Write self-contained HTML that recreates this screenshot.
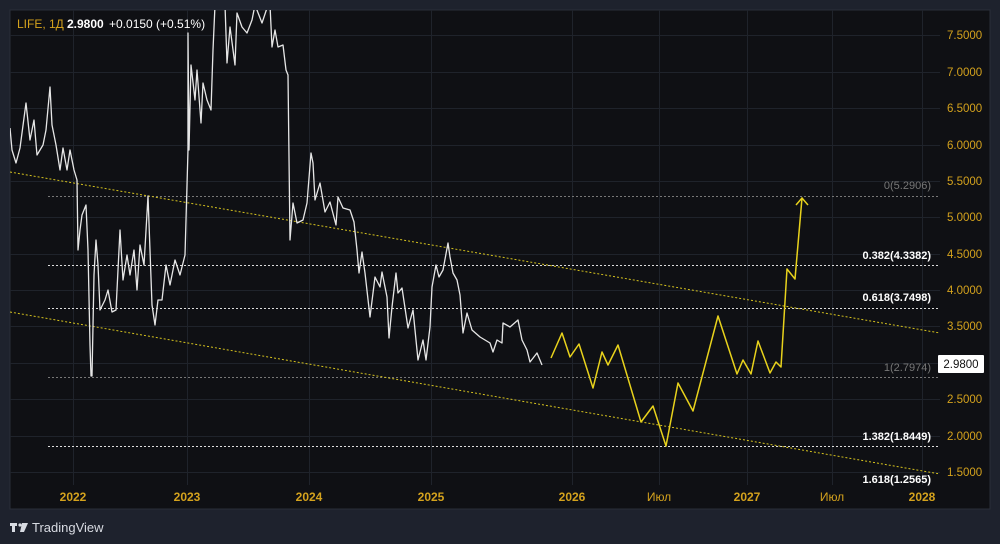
<!DOCTYPE html>
<html><head><meta charset="utf-8">
<style>
html,body{margin:0;padding:0;background:#1e222d;width:1000px;height:544px;overflow:hidden;font-family:"Liberation Sans",sans-serif;}
</style></head><body>
<svg width="1000" height="544" viewBox="0 0 1000 544" xmlns="http://www.w3.org/2000/svg" font-family="Liberation Sans, sans-serif">
<rect width="1000" height="544" fill="#1e222d"/>
<rect x="10" y="10" width="980" height="499" fill="#0f1014" stroke="#2a2e39" stroke-width="1"/>
<defs><clipPath id="c"><rect x="10" y="10" width="930" height="475"/></clipPath></defs>
<g stroke="#1f232b" stroke-width="1">
<line x1="10" x2="940" y1="35.5" y2="35.5"/><line x1="10" x2="940" y1="72.5" y2="72.5"/><line x1="10" x2="940" y1="108.5" y2="108.5"/><line x1="10" x2="940" y1="145.5" y2="145.5"/><line x1="10" x2="940" y1="181.5" y2="181.5"/><line x1="10" x2="940" y1="217.5" y2="217.5"/><line x1="10" x2="940" y1="254.5" y2="254.5"/><line x1="10" x2="940" y1="290.5" y2="290.5"/><line x1="10" x2="940" y1="326.5" y2="326.5"/><line x1="10" x2="940" y1="363.5" y2="363.5"/><line x1="10" x2="940" y1="399.5" y2="399.5"/><line x1="10" x2="940" y1="436.5" y2="436.5"/><line x1="10" x2="940" y1="472.5" y2="472.5"/>
<line y1="10" y2="485" x1="73.5" x2="73.5"/><line y1="10" y2="485" x1="187.5" x2="187.5"/><line y1="10" y2="485" x1="309.5" x2="309.5"/><line y1="10" y2="485" x1="431.5" x2="431.5"/><line y1="10" y2="485" x1="572.5" x2="572.5"/><line y1="10" y2="485" x1="659.5" x2="659.5"/><line y1="10" y2="485" x1="747.5" x2="747.5"/><line y1="10" y2="485" x1="832.5" x2="832.5"/><line y1="10" y2="485" x1="922.5" x2="922.5"/>
</g>
<g clip-path="url(#c)">
<g stroke-dasharray="2,2" stroke-width="1">
<line x1="48" x2="938" y1="196.5" y2="196.5" stroke="#777"/>
<line x1="48" x2="938" y1="265.5" y2="265.5" stroke="#ddd"/>
<line x1="48" x2="938" y1="308.5" y2="308.5" stroke="#ddd"/>
<line x1="48" x2="938" y1="377.5" y2="377.5" stroke="#777"/>
<line x1="48" x2="938" y1="446.5" y2="446.5" stroke="#ddd"/>
<line x1="10" x2="940" y1="172" y2="333" stroke="#d4c11e"/>
<line x1="10" x2="940" y1="312" y2="474" stroke="#d4c11e"/>
</g>
<polyline fill="none" stroke="#e6e6e6" stroke-width="1.3" stroke-linejoin="round" points="10,128 12,150 16,163 20,148 26,103 30,140 34,120 37,155 43,145 46,130 50,87 52,125 56,145 60,170 63,148 67,170 70,150 74,170 77,180 78,250 80,230 82,215 86,205 88,250 90,345 91,376 92,376 94,275 96,240 98,265 100,310 105,300 108,290 112,312 116,310 120,230 123,280 127,255 130,275 134,250 137,290 140,245 144,265 148,196 152,305 155,325 158,300 162,300 166,265 170,285 175,260 180,275 185,255 188,150 188,33 189,150 191,65 195,100 197,70 201,123 203,83 207,100 211,110 213,50 215,5 225,5 227,63 230,27 235,65 237,13 242,27 247,33 252,20 255,5 262,23 268,5 270,5 272,47 275,30 278,47 283,45 286,70 288,75 290,240 293,203 297,223 303,220 307,203 311,153 313,163 315,200 320,183 325,212 330,202 336,225 338,197 343,208 350,210 354,222 357,250 359,273 362,252 365,273 370,317 375,277 380,287 382,272 387,297 389,338 392,307 396,273 398,293 402,288 408,328 413,310 418,360 423,340 426,360 430,327 432,287 436,265 439,277 443,270 448,243 450,257 453,273 457,280 460,295 463,333 467,313 472,330 480,337 490,343 493,352 497,340 502,343 503,323 510,327 518,320 522,340 527,350 530,362 537,353 542,365"/>
<polyline fill="none" stroke="#e8d21c" stroke-width="1.5" stroke-linejoin="round" points="551,358 562,333 570,357 579,344 593,388 602,352 608,365 618,345 641,422 653,406 666,446 678,383 693,411 718,316 737,374 743,360 751,374 758,341 770,373 776,362 781,367 787,269 795,279 802,198"/>
<polyline fill="none" stroke="#e8d21c" stroke-width="1.5" points="796,205 802,198 808,205"/>
</g>
<g font-size="11" font-weight="bold" fill="#fff" text-anchor="end">
<text x="931" y="189" fill="#777" font-weight="normal">0(5.2906)</text>
<text x="931" y="259">0.382(4.3382)</text>
<text x="931" y="301">0.618(3.7498)</text>
<text x="931" y="371" fill="#777" font-weight="normal">1(2.7974)</text>
<text x="931" y="440">1.382(1.8449)</text>
<text x="931" y="483">1.618(1.2565)</text>
</g>
<g font-size="11.5" fill="#d4a21d" text-anchor="start">
<text x="947" y="39">7.5000</text><text x="947" y="76">7.0000</text><text x="947" y="112">6.5000</text><text x="947" y="149">6.0000</text><text x="947" y="185">5.5000</text><text x="947" y="221">5.0000</text><text x="947" y="258">4.5000</text><text x="947" y="294">4.0000</text><text x="947" y="330">3.5000</text><text x="947" y="403">2.5000</text><text x="947" y="440">2.0000</text><text x="947" y="476">1.5000</text>
</g>
<rect x="938" y="355" width="46" height="18" fill="#fff" rx="1"/>
<text x="961" y="368" font-size="11.5" fill="#111" text-anchor="middle">2.9800</text>
<g font-size="12" font-weight="bold" fill="#d4a21d" text-anchor="middle">
<text x="73" y="501">2022</text><text x="187" y="501">2023</text><text x="309" y="501">2024</text><text x="431" y="501">2025</text><text x="572" y="501">2026</text><text x="659" y="501" font-weight="normal">Июл</text><text x="747" y="501">2027</text><text x="832" y="501" font-weight="normal">Июл</text><text x="922" y="501">2028</text>
</g>
<text x="17" y="28" font-size="12" fill="#d4a21d">LIFE, 1Д</text>
<text x="67" y="28" font-size="12" fill="#fff" font-weight="bold">2.9800</text>
<text x="109" y="28" font-size="12" fill="#fff">+0.0150 (+0.51%)</text>
<g fill="#d8dbe2">
<rect x="10" y="523" width="7" height="3"/><rect x="12" y="523" width="3" height="9"/>
<circle cx="20" cy="525" r="1.6"/><polygon points="22,523 28,523 24,532 20,532"/>
</g>
<text x="32" y="532" font-size="13" fill="#d8dbe2">TradingView</text>
</svg>
</body></html>
